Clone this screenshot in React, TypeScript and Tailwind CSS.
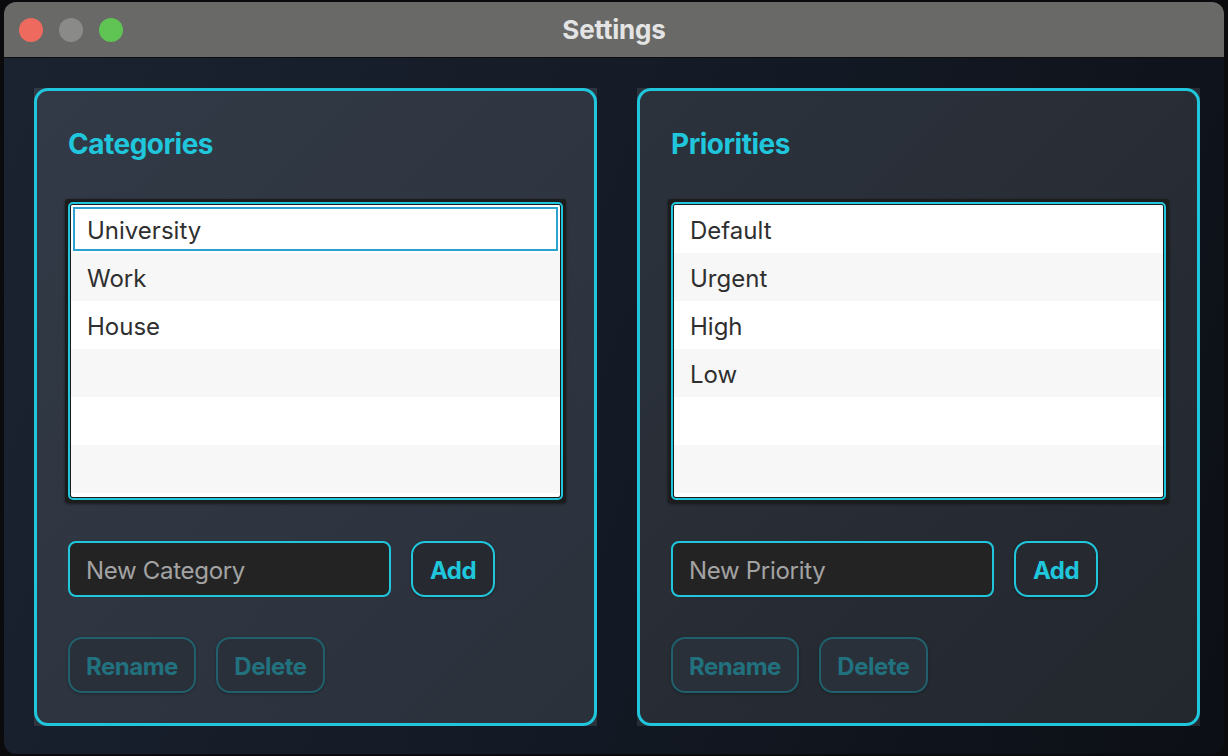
function ListBox({ items, selected }: { items: string[]; selected?: number }) {
  const rows = [...items, ...Array(Math.max(0, 6 - items.length)).fill("")];
  return (
    <div className="w-[501px] h-[304px] bg-[#1c1c1c] p-[3px] rounded-[3px] shadow-[0_1px_3px_rgba(0,0,0,0.5)]">
      <div className="h-full border-2 border-[#1fc6dc] rounded-[5px] bg-[#1a1a1a] p-[1px] overflow-hidden">
        <div className="h-full bg-white rounded-[2px] overflow-hidden">
          {rows.map((t, i) => (
            <div
              key={i}
              className={`h-[48px] flex items-center ${i % 2 === 1 ? "bg-[#f7f7f7]" : "bg-white"}`}
            >
              {i === selected ? (
                <div className="mx-[2px] h-[44px] flex-1 flex items-center border-2 border-[#2ea2cf] pl-[12px] pt-[3px] text-[24px] text-[#2f2f2f]">
                  {t}
                </div>
              ) : (
                <span className="pl-[16px] pt-[4px] text-[24px] text-[#2f2f2f]">{t}</span>
              )}
            </div>
          ))}
        </div>
      </div>
    </div>
  );
}

function Panel({
  title, items, selected, placeholder, tone,
}: {
  title: string; items: string[]; selected?: number; placeholder: string; tone: string;
}) {
  return (
    <div className={`w-[563px] h-[638px] ${tone}`}>
      <div className="h-full border-[3px] border-[#1fc6dc] rounded-[14px] px-[28px] pt-[33px] flex flex-col">
        <h2 className="ml-[3px] text-[28px] leading-[40px] font-bold tracking-[-0.5px] text-[#1fc6dc]">{title}</h2>
        <div className="mt-[35px]">
          <ListBox items={items} selected={selected} />
        </div>
        <div className="mt-[38px] flex items-center gap-[20px] pl-[3px]">
          <div className="w-[323px] h-[56px] rounded-[8px] border-2 border-[#1fc6dc] bg-[#232323] flex items-center pl-[16px] pt-[3px] text-[24px] tracking-[-0.3px] text-[#a3a3a3]">
            {placeholder}
          </div>
          <button className="w-[84px] h-[56px] rounded-[14px] border-2 border-[#1fc6dc] bg-[#262a30] pt-[3px] text-[24px] font-bold tracking-[-0.5px] text-[#1fc6dc] shadow-[0_1px_3px_rgba(0,0,0,0.35)]">
            Add
          </button>
        </div>
        <div className="mt-[40px] flex items-center gap-[20px] pl-[3px]">
          <button className="w-[128px] h-[56px] rounded-[14px] border-2 border-[#1f606c] bg-[#2a3039] pt-[3px] text-[24px] font-bold tracking-[-0.5px] text-[#21717f] shadow-[0_1px_3px_rgba(0,0,0,0.3)]">
            Rename
          </button>
          <button className="w-[109px] h-[56px] rounded-[14px] border-2 border-[#1f606c] bg-[#2a3039] pt-[3px] text-[24px] font-bold tracking-[-0.5px] text-[#21717f] shadow-[0_1px_3px_rgba(0,0,0,0.3)]">
            Delete
          </button>
        </div>
      </div>
    </div>
  );
}

export default function App() {
  return (
    <div
      className="w-[1228px] h-[756px] bg-[#0b0b0d] pt-[2px] pl-[4px] overflow-hidden"
      style={{ fontFamily: "Inter, 'Noto Sans', sans-serif" }}
    >
      <div className="w-[1220px] h-[752px] rounded-[12px] overflow-hidden flex flex-col">
        <div className="relative h-[56px] bg-[#696967] border-b border-[#0d0d0d] flex items-center justify-center shrink-0">
          <div className="absolute left-[15px] top-[16px] flex gap-[16px]">
            <span className="w-[24px] h-[24px] rounded-full bg-[#ee6a5e]" />
            <span className="w-[24px] h-[24px] rounded-full bg-[#8a8a88]" />
            <span className="w-[24px] h-[24px] rounded-full bg-[#5fc454]" />
          </div>
          <span className="text-[26px] font-bold text-[#e4e4e4] tracking-[-0.2px]">Settings</span>
        </div>
        <div className="flex-1 bg-[linear-gradient(110deg,#1b2331_0%,#131924_55%,#0c0f15_100%)] pt-[30px] pl-[30px] flex gap-[40px]">
          <Panel
            title="Categories"
            items={["University", "Work", "House"]}
            selected={0}
            placeholder="New Category"
            tone="bg-[linear-gradient(135deg,#323a47_0%,#2b313b_100%)]"
          />
          <Panel
            title="Priorities"
            items={["Default", "Urgent", "High", "Low"]}
            placeholder="New Priority"
            tone="bg-[linear-gradient(135deg,#2c323c_0%,#23272e_100%)]"
          />
        </div>
      </div>
    </div>
  );
}
